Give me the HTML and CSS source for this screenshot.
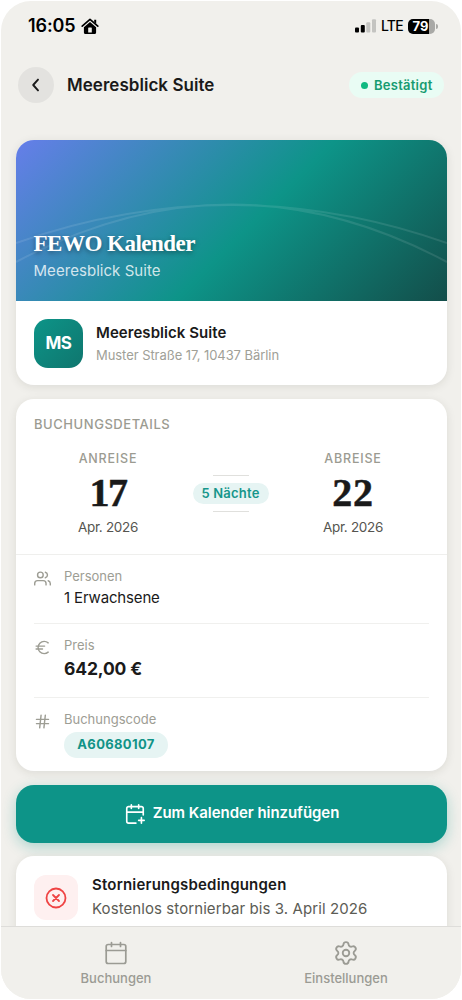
FILE: index.html
```
<!DOCTYPE html>
<html lang="de">
<head>
<meta charset="utf-8">
<meta name="viewport" content="width=device-width, initial-scale=1">
<title>Meeresblick Suite</title>
<link rel="stylesheet" href="styles.css">
</head>
<body>
<div class="phone">
  <div class="status-bar">
    <span class="clock">16:05</span>
    <svg class="home" width="18" height="17" viewBox="0 0 18 17"><path d="M1.2 8.2 9 1.4l7.8 6.8" fill="none" stroke="#000" stroke-width="1.7" stroke-linecap="round" stroke-linejoin="round"/><path d="M13.2 1.8h2v4l-2-1.7z"/><path fill-rule="evenodd" d="M9 4.1 15.1 9.3v5.2a1.6 1.6 0 0 1-1.6 1.6h-9a1.6 1.6 0 0 1-1.6-1.6V9.3zM7.2 14.5h3.6V10a.6.6 0 0 0-.6-.6H7.8a.6.6 0 0 0-.6.6z"/></svg>
    <div class="indicators">
      <svg width="22" height="14" viewBox="0 0 22 14"><rect x="0" y="8.5" width="4" height="5" rx="1"/><rect x="5.8" y="6" width="4" height="7.5" rx="1"/><g fill="#c4c4c1"><rect x="11.3" y="3.2" width="4" height="10.3" rx="1"/><rect x="17" y="0.3" width="4" height="13.2" rx="1"/></g></svg>
      <span class="network">LTE</span>
      <span class="battery"><span class="level">79</span></span>
      <span class="battery-tip"></span>
    </div>
  </div>

  <header class="header">
    <div class="back"><svg width="18" height="18" viewBox="0 0 18 18"><path d="M11 3.6 6.200 9l4.800 5.400"/></svg></div>
    <h1 class="header-title">Meeresblick Suite</h1>
    <div class="status-pill"><span class="dot"></span><span class="status-text">Bestätigt</span></div>
  </header>

  <main class="content">
    <section class="card property">
      <div class="hero">
        <svg class="arcs" viewBox="0 0 431 161"><path d="M0 103Q215.500 27 431 103M0 122Q215.500 7 431 122" /></svg>
        <div class="hero-title">FEWO Kalender</div>
        <div class="hero-sub">Meeresblick Suite</div>
      </div>
      <div class="property-row">
        <div class="avatar">MS</div>
        <div class="property-info">
          <div class="property-name">Meeresblick Suite</div>
          <div class="property-address">Muster Straße 17, 10437 Bärlin</div>
        </div>
      </div>
    </section>

    <section class="card details">
      <h2 class="section-label">BUCHUNGSDETAILS</h2>
      <div class="dates">
        <div class="date"><div class="date-label">ANREISE</div><div class="day day-in">17</div><div class="month">Apr. 2026</div></div>
        <div class="nights"><span class="line"></span><span class="nights-pill">5 Nächte</span><span class="line"></span></div>
        <div class="date"><div class="date-label">ABREISE</div><div class="day">22</div><div class="month">Apr. 2026</div></div>
      </div>
      <div class="rows">
        <div class="row guests">
          <svg class="row-icon" viewBox="0 0 24 24"><path d="M17 21v-2a4 4 0 0 0-4-4H5a4 4 0 0 0-4 4v2"/><circle cx="9" cy="7" r="4"/><path d="M23 21v-2a4 4 0 0 0-3-3.870M16 3.130a4 4 0 0 1 0 7.750"/></svg>
          <div><div class="row-label">Personen</div><div class="row-value">1 Erwachsene</div></div>
        </div>
        <div class="row price">
          <svg class="row-icon" viewBox="0 0 24 24"><path d="M3 10h12M3 14h9M20 5.500a8.500 8.500 0 0 0-5.700-2.200A8.500 8.500 0 0 0 5.800 12a8.500 8.500 0 0 0 8.500 8.700 8.500 8.500 0 0 0 5.700-2.200"/></svg>
          <div><div class="row-label">Preis</div><div class="row-value amount">642,00 €</div></div>
        </div>
        <div class="row code">
          <svg class="row-icon" viewBox="0 0 24 24"><path d="M3.500 9h17M3.500 15h17M10 3 8 21M16 3l-2 18"/></svg>
          <div><div class="row-label">Buchungscode</div><div class="code-pill">A60680107</div></div>
        </div>
      </div>
    </section>

    <div class="calendar-button">
      <svg width="22" height="22" viewBox="0 0 24 24"><path d="M8 2v4M16 2v4M21 13V6a2 2 0 0 0-2-2H5a2 2 0 0 0-2 2v14a2 2 0 0 0 2 2h8M3 10h18M16 19h6M19 16v6"/></svg>
      <span class="calendar-text">Zum Kalender hinzufügen</span>
    </div>

    <section class="card cancel">
      <div class="cancel-icon"><svg width="24" height="24" viewBox="0 0 24 24"><circle cx="12" cy="12" r="9.500"/><path d="m15 9-6 6M9 9l6 6"/></svg></div>
      <div>
        <div class="cancel-title">Stornierungsbedingungen</div>
        <div class="cancel-text">Kostenlos stornierbar bis 3. April 2026</div>
      </div>
    </section>
  </main>

  <nav class="tabs">
    <div class="tab"><svg viewBox="0 0 24 24"><path d="M7.500 1.500v4M16.500 1.500v4M2.200 9.500h19.600"/><rect x="2.200" y="3.500" width="19.600" height="19" rx="2"/></svg><span>Buchungen</span></div>
    <div class="tab"><svg viewBox="1 1 22 22"><path d="M9.671 4.136a2.340 2.340 0 0 1 4.659 0 2.340 2.340 0 0 0 3.319 1.915 2.340 2.340 0 0 1 2.330 4.033 2.340 2.340 0 0 0 0 3.831 2.340 2.340 0 0 1-2.330 4.033 2.340 2.340 0 0 0-3.319 1.915 2.340 2.340 0 0 1-4.659 0 2.340 2.340 0 0 0-3.320-1.915 2.340 2.340 0 0 1-2.330-4.033 2.340 2.340 0 0 0 0-3.831A2.340 2.340 0 0 1 6.350 6.051a2.340 2.340 0 0 0 3.319-1.915"/><circle cx="12" cy="12" r="3"/></svg><span>Einstellungen</span></div>
  </nav>
</div>
</body>
</html>
```
FILE: styles.css
```
* { box-sizing: border-box; }
body { margin: 0; padding: 1px; background: #fff; font-family: Inter, "Liberation Sans", sans-serif; color: #1a1a1a; }
h1, h2 { margin: 0; }
svg { display: block; flex: none; }
.phone { width: 460px; height: 998px; border-radius: 30px; background: #f1f0ec; overflow: hidden; display: flex; flex-direction: column; white-space: nowrap; }

.status-bar { height: 50px; padding: 0 23px 0 27px; display: flex; align-items: center; flex: none; color: #000; }
.clock { font-size: 18px; line-height: 22px; font-weight: 600; letter-spacing: -0.1px; padding-bottom: 1px; }
.home { margin-left: 5px; }
.indicators { margin-left: auto; display: flex; align-items: center; }
.network { font-size: 14px; line-height: 18px; font-weight: 500; margin-left: 4px; width: 27px; letter-spacing: -0.8px; }
.battery { width: 27px; height: 15px; border-radius: 5px; background: linear-gradient(90deg, #000 79%, #a9a9a6 79%); color: #fff; font-size: 13px; font-weight: 700; line-height: 15px; }
.level { display: block; width: 25px; text-align: center; }
.battery-tip { width: 2px; height: 5px; margin-left: 1px; border-radius: 0 2px 2px 0; background: #a9a9a6; }

.header { height: 68px; padding: 0 17px; display: flex; align-items: center; flex: none; }
.back { width: 36px; height: 36px; border-radius: 50%; background: #e3e2df; display: grid; place-items: center; }
.back path { fill: none; stroke: #1a1a1a; stroke-width: 1.9; stroke-linecap: round; stroke-linejoin: round; }
.header-title { margin-left: 13px; font-size: 17px; font-weight: 600; letter-spacing: 0.04px; }
.status-pill { margin-left: auto; width: 95px; height: 26px; border-radius: 13px; background: #e9fcf4; display: flex; align-items: center; padding-left: 12px; gap: 6px; color: #169b70; font-size: 13px; font-weight: 600; letter-spacing: 0.25px; }
.dot { width: 7px; height: 7px; border-radius: 50%; background: #10b981; }

.content { padding: 20.500px 15px 0; flex: 1; min-height: 0; overflow: hidden; display: flex; flex-direction: column; gap: 14px; }
.card { flex: none; width: 431px; border-radius: 18px; background: #fff; box-shadow: 0 2px 10px rgba(40, 40, 20, 0.1); overflow: hidden; }
.property { height: 245.500px; }
.hero { position: relative; height: 161px; padding: 90px 18px 0 17.500px; background: linear-gradient(135deg, #667eea 0%, #0d9488 54%, #134e4a 100%); color: #fff; }
.arcs { position: absolute; inset: 0; width: 431px; height: 161px; }
.arcs path { fill: none; stroke: rgba(255, 255, 255, 0.1); stroke-width: 2; }
.hero-title { position: relative; font: bold 23px/28px "Liberation Serif", serif; letter-spacing: -0.5px; text-shadow: 0 2px 5px rgba(0, 0, 0, 0.4); }
.hero-sub { position: relative; font-size: 15px; line-height: 20px; margin-top: 3px; letter-spacing: 0.05px; color: rgba(255, 255, 255, 0.8); }
.property-row { height: 85px; padding-left: 18px; display: flex; align-items: center; gap: 13px; }
.property-info { padding-top: 1px; }
.avatar { width: 49px; height: 49px; border-radius: 14px; background: linear-gradient(135deg, #0d9488, #0f766e); color: #fff; font-size: 17px; font-weight: 700; letter-spacing: -0.4px; display: grid; place-items: center; }
.property-name { font-size: 15px; font-weight: 600; line-height: 22px; letter-spacing: 0.06px; }
.property-address { font-size: 13px; line-height: 22px; letter-spacing: -0.06px; color: #a0a097; }

.details { height: 372px; }
.section-label { padding: 17px 18px 0; font-size: 13px; line-height: 17px; font-weight: 500; letter-spacing: 0.55px; color: #9b9b91; }
.dates { height: 122px; padding: 17px 18px 0 17px; display: flex; border-bottom: 1px solid #efefed; }
.date { width: 150px; text-align: center; }
.date-label { font-size: 12.500px; line-height: 18px; font-weight: 500; letter-spacing: 0.8px; color: #9b9b91; }
.day { font: bold 40px/48px "Liberation Serif", serif; padding-top: 1px; letter-spacing: 0.8px; -webkit-text-stroke: 0.5px #1a1a1a; }
.day-in { letter-spacing: -1.500px; }
.month { font-size: 13.500px; line-height: 20px; letter-spacing: -0.3px; color: #55554f; }
.nights { width: 95px; display: flex; flex-direction: column; align-items: center; padding-top: 25px; gap: 7px; }
.line { width: 36px; height: 1px; background: #e0e0dd; }
.nights-pill { width: 76px; height: 21px; border-radius: 11px; background: #e6f4f3; color: #16968b; font-size: 13px; line-height: 21px; font-weight: 600; letter-spacing: 0.2px; text-align: center; }
.rows { padding: 0 18px; }
.row { display: flex; gap: 13px; border-bottom: 1px solid #f0f0ee; }
.row-icon { width: 17px; height: 17px; margin-top: 15px; fill: none; stroke: #9d9d94; stroke-width: 2; stroke-linecap: round; stroke-linejoin: round; }
.row-label { margin-top: 11px; font-size: 13px; line-height: 20px; color: #9d9d94; }
.row-value { font-size: 15px; line-height: 23px; letter-spacing: -0.15px; }
.guests { height: 69px; }
.price { height: 74px; }
.amount { font-size: 17.500px; line-height: 28px; font-weight: 700; }
.code { border: 0; }
.code-pill { margin-top: 3px; width: 104px; height: 26px; border-radius: 13px; background: #e6f4f3; color: #109387; font-size: 13px; line-height: 25px; font-weight: 700; letter-spacing: 0.35px; text-align: center; }

.calendar-button { flex: none; width: 431px; height: 58px; margin-top: -0.500px; border-radius: 18px; background: #0d9488; color: #fff; box-shadow: 0 4px 14px rgba(13, 148, 136, 0.3); display: flex; align-items: center; justify-content: center; gap: 7px; font-size: 15px; font-weight: 600; }
.calendar-text { padding-bottom: 2px; letter-spacing: -0.05px; }
.calendar-button path, .cancel-icon svg { fill: none; stroke: currentColor; stroke-width: 1.8; stroke-linecap: round; stroke-linejoin: round; }
.cancel { height: 110px; margin-top: -0.500px; display: flex; padding: 19px 18px; gap: 14px; }
.cancel-icon { width: 44px; height: 45px; border-radius: 12px; background: #fef0f0; color: #ef4444; display: grid; place-items: center; }
.cancel-title { font-size: 15px; line-height: 20px; font-weight: 600; letter-spacing: 0.2px; }
.cancel-text { font-size: 15px; line-height: 24px; margin-top: 2px; letter-spacing: 0.08px; color: #5c5c55; }

.tabs { position: relative; flex: none; height: 73px; border-top: 1px solid #deddda; background: #f1f0ec; display: flex; }
.tab { width: 50%; display: flex; flex-direction: column; align-items: center; padding-top: 14px; gap: 4px; font-size: 13px; line-height: 18px; font-weight: 500; color: #9b9b94; }
.tab svg { width: 24px; height: 24px; fill: none; stroke: currentColor; stroke-width: 1.7; stroke-linecap: round; stroke-linejoin: round; }
```
